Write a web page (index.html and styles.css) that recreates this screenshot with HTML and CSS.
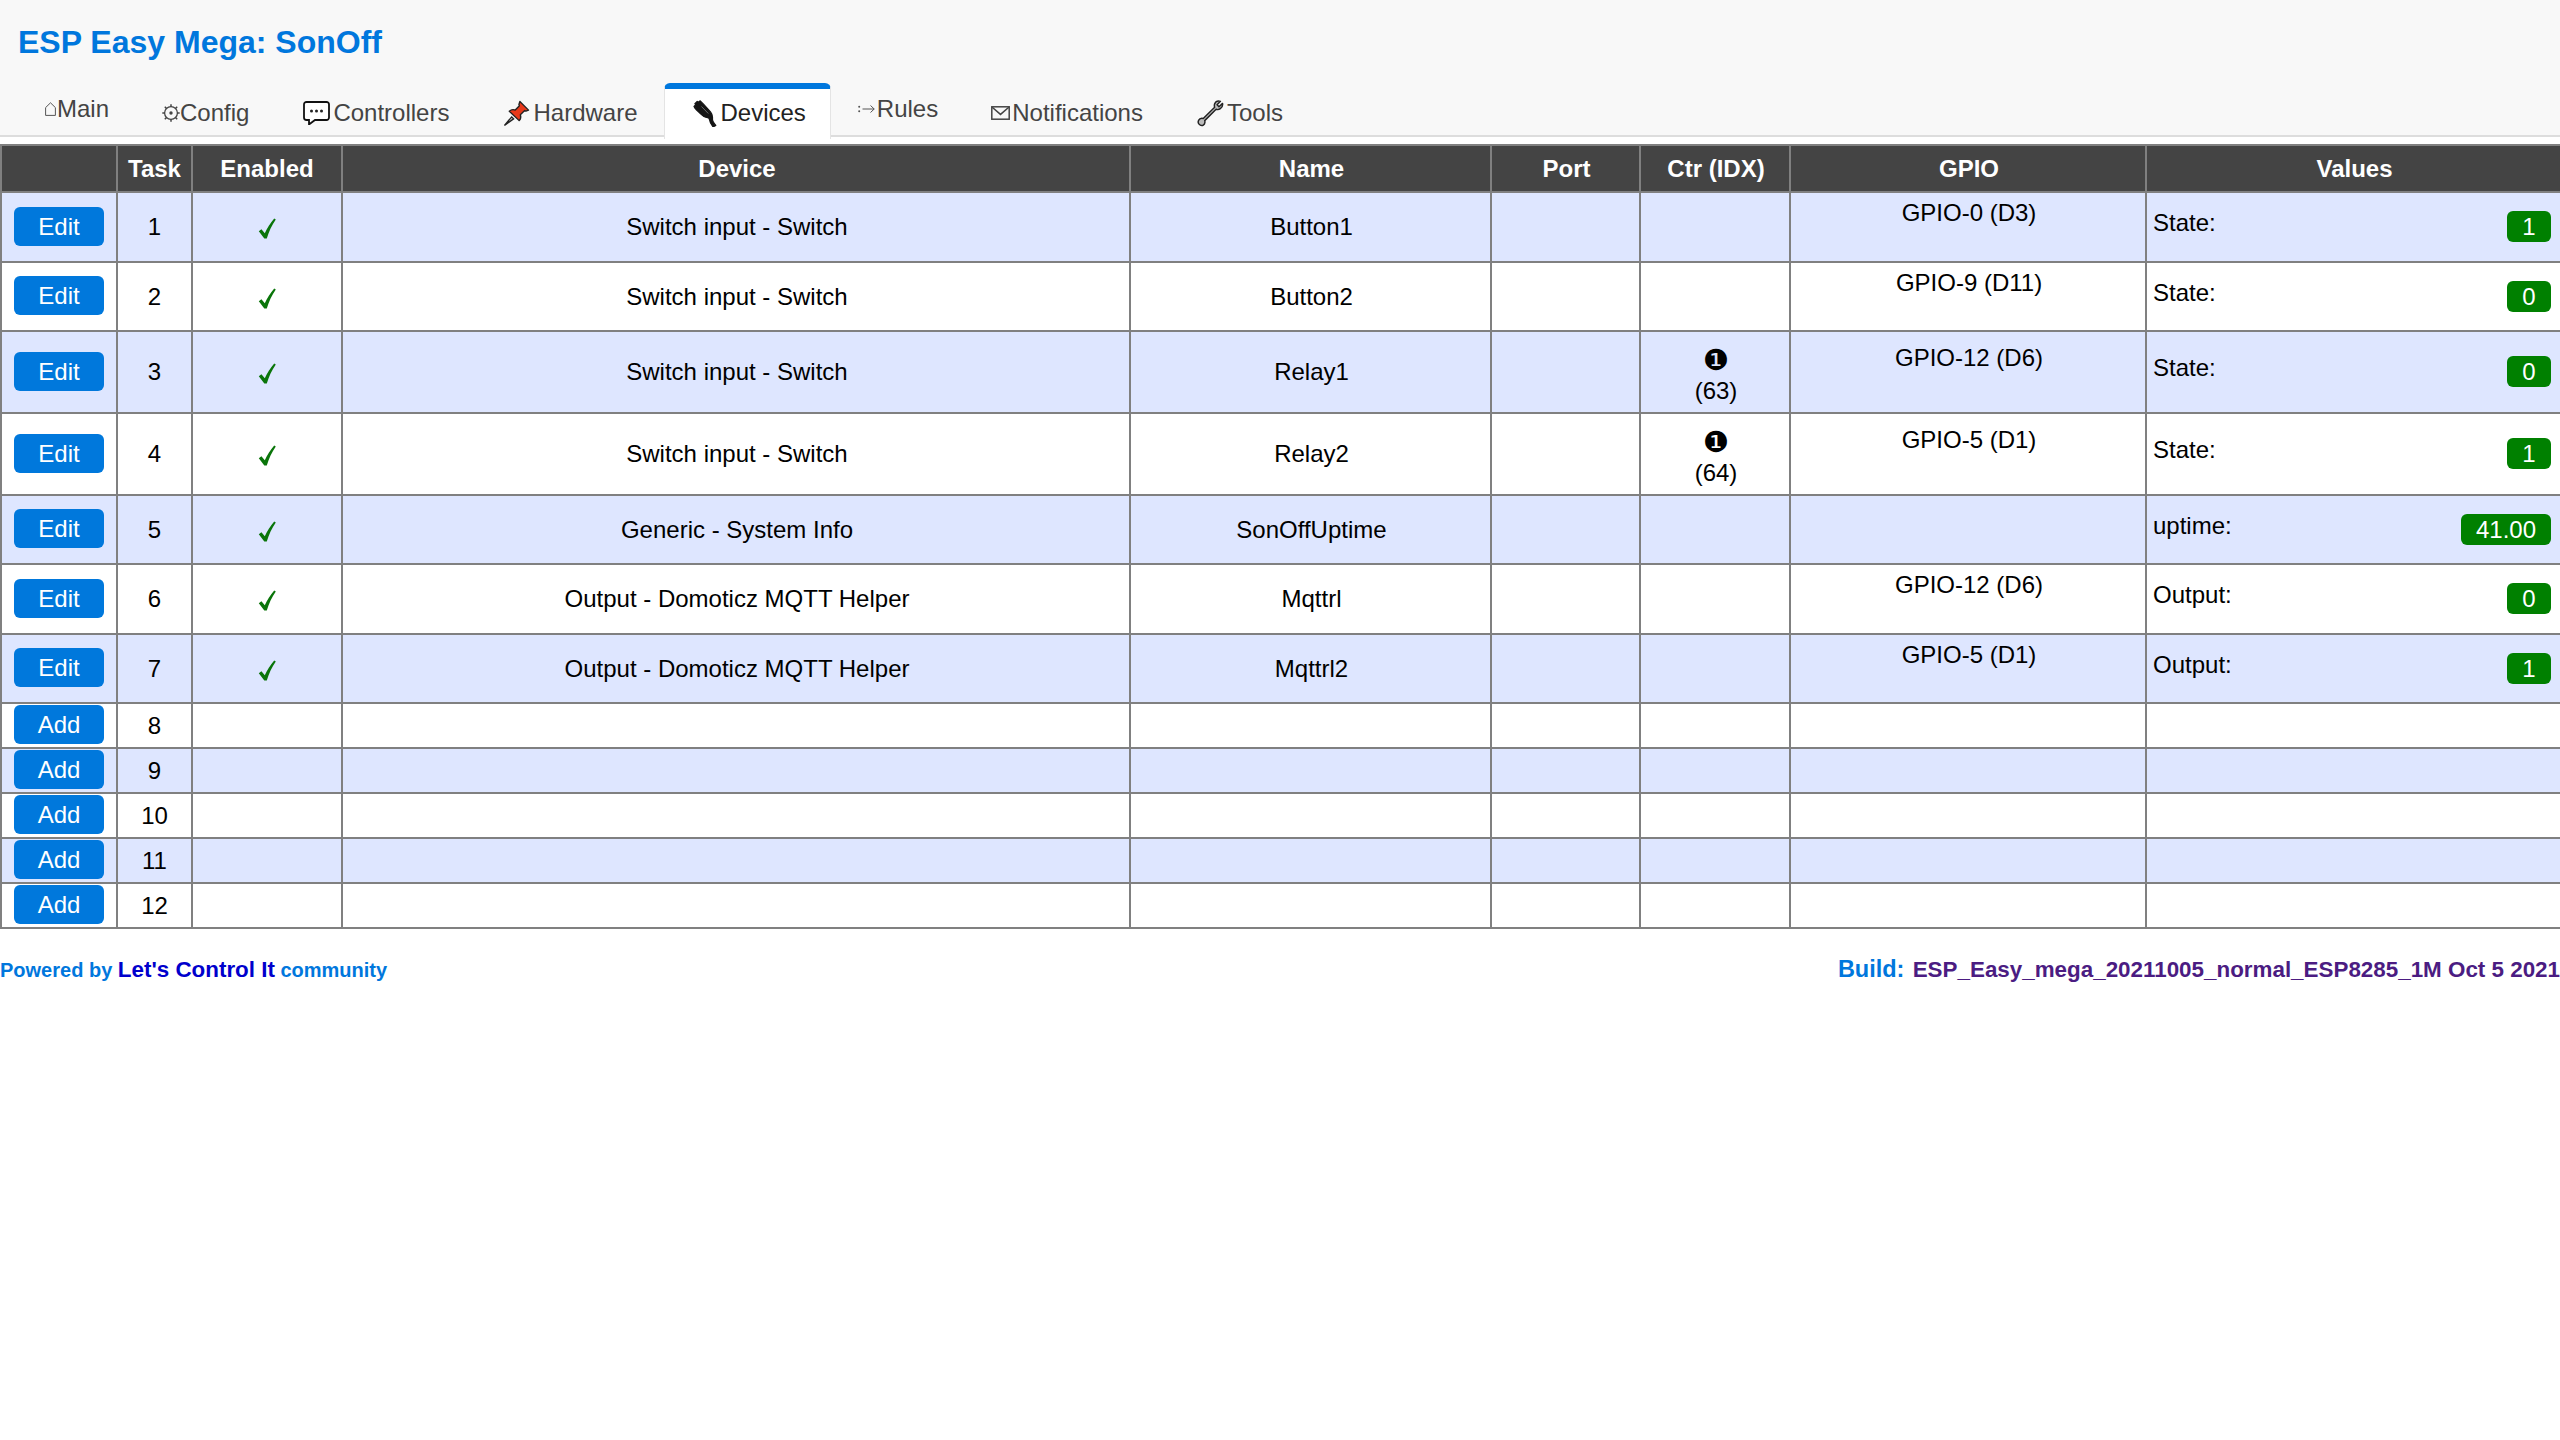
FILE: index.html
```html
<!DOCTYPE html>
<html lang="en">
<head>
<meta charset="utf-8">
<title>ESP Easy Mega: SonOff</title>
<link rel="stylesheet" href="styles.css">
</head>
<body>
<svg class="defs" aria-hidden="true"><defs><symbol id="chk" viewBox="0 0 18 21"><path d="M0.800 13.300 3.400 11.300 6.800 15.300C9.300 10 12.400 5 16.200 0.600L17.800 1.500C13.800 7.200 10.800 13.500 8.800 20.500H6.300z" fill="#0a750a"/></symbol></defs></svg>
<header class="top">
  <h1 class="title">ESP Easy Mega: SonOff</h1>
  <nav class="tabs">
    <a class="tab raised"><svg class="ic i-house" viewBox="0 0 11 14"><path d="M.6 13.400V5.600L5.500.8l4.900 4.800v7.800z" fill="none" stroke="#555" stroke-width="1"/></svg>Main</a>
    <a class="tab"><svg class="ic i-gear" viewBox="0 0 18 18"><circle cx="9" cy="9" r="6.400" fill="none" stroke="#444" stroke-width="1.300"/><circle cx="9" cy="9" r="1.700" fill="#444"/><path d="M9 .3v2.400M9 15.300v2.400M.3 9h2.400M15.300 9h2.400M2.800 2.800l1.700 1.700M13.500 13.500l1.700 1.700M2.800 15.200l1.700-1.700M13.500 4.500l1.700-1.700" stroke="#444" stroke-width="1.500"/></svg>Config</a>
    <a class="tab"><svg class="ic i-chat" viewBox="0 0 27 24"><path d="M3.500 1h20a2.500 2.500 0 0 1 2.500 2.500v13a2.500 2.500 0 0 1-2.500 2.500H12l-6 4.500V19H3.500A2.500 2.500 0 0 1 1 16.500v-13A2.500 2.500 0 0 1 3.500 1z" fill="#fff" stroke="#111" stroke-width="1.800"/><circle cx="8.500" cy="10" r="1.500" fill="#222"/><circle cx="13.500" cy="10" r="1.500" fill="#222"/><circle cx="18.500" cy="10" r="1.500" fill="#222"/></svg>Controllers</a>
    <a class="tab"><svg class="ic i-pin" viewBox="0 0 28 28"><path d="M1.500 26.500 9 17.500l2 2z" fill="#c9c9c9" stroke="#222" stroke-width="1.400"/><path d="M17.500 1.500l9 9-2.800 1-1.200-.6-4.500 4.300c.9 2.500.4 4.400-1.200 6.200L6.500 11.600c1.800-1.600 3.800-2.100 6.200-1.200L17 6l-.5-1.300z" fill="#e8391a" stroke="#222" stroke-width="1.400" stroke-linejoin="round"/></svg>Hardware</a>
    <a class="tab active"><svg class="ic i-plug" viewBox="0 0 24 27"><path d="M1 6.500 2.800 4.800 1.900 3.700 4.200 1.500l1 1L7.200.8l3.300 3.400 7 7.700c1.400 1.700 2 3.200 2 5.300v2.300c0 2 1.600 3.900 3.300 5.900l-2.700 1.500c-1.800-2.300-3.300-4.400-3.500-7-.1-1.700-.8-2.300-3-2.500-2.200-.3-3.800-1.300-5.400-3L2.800 9.200l1.300-1.200-.9-.9-1.200 1.200z" fill="#151515" stroke="#151515" stroke-width="1.200" stroke-linejoin="round"/><path d="M8.500 6.500l6.800 7" stroke="#6a6a6a" stroke-width="1"/></svg>Devices</a>
    <a class="tab raised"><svg class="ic i-rules" viewBox="0 0 17 12"><circle cx="1.200" cy="3.800" r="1" fill="#555"/><circle cx="1.200" cy="8.200" r="1" fill="#555"/><path d="M4.500 6h11.700M12.500 2.500 16.200 6l-3.700 3.500" fill="none" stroke="#555" stroke-width="1"/></svg>Rules</a>
    <a class="tab"><svg class="ic i-mail" viewBox="0 0 19 14"><rect x=".8" y=".8" width="17.400" height="12.400" fill="none" stroke="#444" stroke-width="1.500"/><path d="M1.200 1.200 9.500 8.400l8.300-7.200" fill="none" stroke="#444" stroke-width="1.500"/></svg>Notifications</a>
    <a class="tab"><svg class="ic i-wrench" viewBox="0 0 28 28"><path d="M26.500 3.500 22.800 7l-2-2 3.500-3.600c-2.700-.7-5 .3-5.900 2.400-.6 1.300-.5 2.500-.1 3.700L6.500 19.200c-2.300-.6-4 .2-4.900 2-.8 2-.1 4 1.800 4.900 2.200 1 4.600-.4 4.800-2.900.1-.7 0-1.200-.2-1.800L19.800 9.600c1.400.6 3 .4 4.400-.6 1.800-1.300 2.700-3.300 2.300-5.500z" fill="#bbb" stroke="#222" stroke-width="1.500" stroke-linejoin="round"/></svg>Tools</a>
  </nav>
</header>

<table class="grid">
  <colgroup>
    <col class="c1"><col class="c2"><col class="c3"><col class="c4"><col class="c5"><col class="c6"><col class="c7"><col class="c8"><col class="c9">
  </colgroup>
  <thead>
    <tr class="h-head"><th></th><th>Task</th><th>Enabled</th><th>Device</th><th>Name</th><th>Port</th><th>Ctr (IDX)</th><th>GPIO</th><th>Values</th></tr>
  </thead>
  <tbody>
    <tr class="h-a"><td><a class="btn">Edit</a></td><td>1</td><td><svg class="check"><use href="#chk"/></svg></td><td>Switch input - Switch</td><td>Button1</td><td></td><td></td><td class="gpio">GPIO-0 (D3)<br>&nbsp;</td><td class="vals"><span class="val-l">State:</span><span class="badge">1</span></td></tr>
    <tr class="h-b"><td><a class="btn">Edit</a></td><td>2</td><td><svg class="check"><use href="#chk"/></svg></td><td>Switch input - Switch</td><td>Button2</td><td></td><td></td><td class="gpio">GPIO-9 (D11)<br>&nbsp;</td><td class="vals"><span class="val-l">State:</span><span class="badge">0</span></td></tr>
    <tr class="h-c"><td><a class="btn">Edit</a></td><td>3</td><td><svg class="check"><use href="#chk"/></svg></td><td>Switch input - Switch</td><td>Relay1</td><td></td><td class="ctr"><span class="num">❶</span>(63)</td><td class="gpio">GPIO-12 (D6)<br>&nbsp;</td><td class="vals"><span class="val-l">State:</span><span class="badge">0</span></td></tr>
    <tr class="h-c"><td><a class="btn">Edit</a></td><td>4</td><td><svg class="check"><use href="#chk"/></svg></td><td>Switch input - Switch</td><td>Relay2</td><td></td><td class="ctr"><span class="num">❶</span>(64)</td><td class="gpio">GPIO-5 (D1)<br>&nbsp;</td><td class="vals"><span class="val-l">State:</span><span class="badge">1</span></td></tr>
    <tr class="h-b"><td><a class="btn">Edit</a></td><td>5</td><td><svg class="check"><use href="#chk"/></svg></td><td>Generic - System Info</td><td>SonOffUptime</td><td></td><td></td><td></td><td class="vals"><span class="val-l">uptime:</span><span class="badge">41.00</span></td></tr>
    <tr class="h-a"><td><a class="btn">Edit</a></td><td>6</td><td><svg class="check"><use href="#chk"/></svg></td><td>Output - Domoticz MQTT Helper</td><td>Mqttrl</td><td></td><td></td><td class="gpio">GPIO-12 (D6)<br>&nbsp;</td><td class="vals"><span class="val-l">Output:</span><span class="badge">0</span></td></tr>
    <tr class="h-b"><td><a class="btn">Edit</a></td><td>7</td><td><svg class="check"><use href="#chk"/></svg></td><td>Output - Domoticz MQTT Helper</td><td>Mqttrl2</td><td></td><td></td><td class="gpio">GPIO-5 (D1)<br>&nbsp;</td><td class="vals"><span class="val-l">Output:</span><span class="badge">1</span></td></tr>
    <tr class="h-d"><td><a class="btn">Add</a></td><td>8</td><td></td><td></td><td></td><td></td><td></td><td></td><td></td></tr>
    <tr class="h-d"><td><a class="btn">Add</a></td><td>9</td><td></td><td></td><td></td><td></td><td></td><td></td><td></td></tr>
    <tr class="h-d"><td><a class="btn">Add</a></td><td>10</td><td></td><td></td><td></td><td></td><td></td><td></td><td></td></tr>
    <tr class="h-d"><td><a class="btn">Add</a></td><td>11</td><td></td><td></td><td></td><td></td><td></td><td></td><td></td></tr>
    <tr class="h-d"><td><a class="btn">Add</a></td><td>12</td><td></td><td></td><td></td><td></td><td></td><td></td><td></td></tr>
  </tbody>
</table>

<footer class="foot">
  <div class="powered">Powered by <a class="lci">Let's Control It</a> community</div>
  <div class="build"><span class="build-l">Build:</span> <span class="build-id">ESP_Easy_mega_20211005_normal_ESP8285_1M Oct 5 2021</span></div>
</footer>
</body>
</html>
```

FILE: styles.css
```css
* { box-sizing: border-box; }
html, body { margin: 0; padding: 0; background: #fff; }
body { font-family: "Liberation Sans", Arial, sans-serif; font-size: 24px; color: #000; }
.defs { display: none; }

.top { height: 137px; background: #f8f8f8; border-bottom: 2px solid #ddd; }
.title { margin: 0; padding: 22px 0 0 18px; height: 83px; font-size: 32px; line-height: 40px; font-weight: bold; color: #0077dd; }
.tabs { display: flex; align-items: flex-start; height: 52px; padding-left: 18px; font-size: 24px; line-height: 28px; color: #444; }
.tab { display: flex; align-items: center; padding: 16px 27px 8px; height: 52px; white-space: nowrap; }
.tab.raised { padding: 12px 26px 12px 27px; }
.tab.active { height: 56px; margin-left: -1px; background: #fff; color: #222; border: 1px solid #e4e4e4; border-top: 6px solid #0077dd; border-bottom: 0; border-radius: 6px 6px 0 0; padding: 10px 24px 12px 28px; }
.ic { display: block; flex: none; }
.i-house { width: 11px; height: 14px; margin-right: 1px; }
.i-gear { width: 18px; height: 18px; }
.i-chat { width: 27px; height: 24px; margin-right: 3px; }
.i-pin { width: 27px; height: 27px; margin-right: 3px; }
.i-plug { width: 24px; height: 27px; margin-right: 4px; }
.i-rules { width: 17px; height: 12px; margin-right: 2px; }
.i-mail { width: 19px; height: 14px; margin-right: 2px; }
.i-wrench { width: 27px; height: 27px; margin-right: 3px; }

.grid { width: 2560px; margin-top: 7px; border-collapse: collapse; table-layout: fixed; line-height: 1.250; }
.c1 { width: 116px; } .c2 { width: 75px; } .c3 { width: 150px; } .c4 { width: 788px; } .c5 { width: 361px; }
.c6 { width: 149px; } .c7 { width: 150px; } .c8 { width: 356px; } .c9 { width: 415px; }
th, td { border: 2px solid #808080; padding: 0; text-align: center; vertical-align: middle; }
th:nth-child(n+4), td:nth-child(n+4) { padding-left: 2px; }
th { background: #444; color: #fff; font-weight: bold; }
tbody tr:nth-child(odd) { background: #dee6ff; }
.h-head { height: 47px; }
.h-a { height: 70px; }
.h-b { height: 69px; }
.h-c { height: 82px; }
.h-d { height: 45px; }

.btn { display: inline-block; width: 90px; height: 39px; margin-bottom: 2px; line-height: 39px; background: #0078dc; color: #fff; border-radius: 6px; vertical-align: middle; }
.check { display: inline-block; width: 18px; height: 21px; vertical-align: middle; }
.gpio { padding-top: 2px; }
.num { display: block; height: 33px; font-family: "DejaVu Sans", sans-serif; font-size: 29px; line-height: 39px; }
.ctr { line-height: 33px; padding-top: 4px; }
td.vals { text-align: left; padding: 0 9px 0 6px; }
.val-l { display: inline-block; padding-bottom: 8px; }
.badge { float: right; min-width: 44px; height: 31px; margin-top: 3px; line-height: 31px; padding: 0 15px; background: #008000; color: #fff; border-radius: 6px; text-align: center; }

.foot { display: flex; justify-content: space-between; align-items: center; margin-top: 27px; font-weight: bold; }
.powered { font-size: 20px; color: #0077dd; }
.lci { font-size: 22.400px; color: #0000cc; }
.build { font-size: 22.400px; color: #4b1c82; }
.build-l { color: #0077dd; font-size: 23.500px; margin-right: 2px; }
.build-id { color: #4b1c82; }
```
